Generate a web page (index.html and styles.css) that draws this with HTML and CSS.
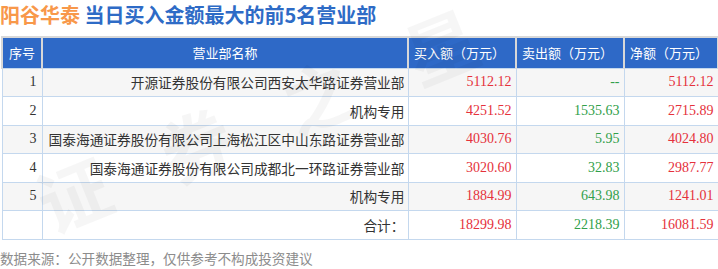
FILE: index.html
```html
<!DOCTYPE html>
<html lang="zh-CN">
<head>
    <meta charset="UTF-8" />
    <title>阳谷华泰 当日买入金额最大的前5名营业部</title>
    <link rel="stylesheet" href="styles.css">
</head>
<body>

<div class="page">
    <h1 class="title"><span class="stock">阳谷华泰</span> <span class="caption">当日买入金额最大的前5名营业部</span></h1>

    <table class="broker-table">
        <thead>
            <tr>
                <th class="col-no">序号</th>
                <th class="col-name">营业部名称</th>
                <th class="col-num">买入额（万元）</th>
                <th class="col-num">卖出额（万元）</th>
                <th class="col-num">净额（万元）</th>
            </tr>
        </thead>
        <tbody>
            <tr class="odd">
                <td class="no">1</td>
                <td class="name">开源证券股份有限公司西安太华路证券营业部</td>
                <td class="num up">5112.12</td>
                <td class="num down">--</td>
                <td class="num up">5112.12</td>
            </tr>
            <tr>
                <td class="no">2</td>
                <td class="name">机构专用</td>
                <td class="num up">4251.52</td>
                <td class="num down">1535.63</td>
                <td class="num up">2715.89</td>
            </tr>
            <tr class="odd">
                <td class="no">3</td>
                <td class="name">国泰海通证券股份有限公司上海松江区中山东路证券营业部</td>
                <td class="num up">4030.76</td>
                <td class="num down">5.95</td>
                <td class="num up">4024.80</td>
            </tr>
            <tr>
                <td class="no">4</td>
                <td class="name">国泰海通证券股份有限公司成都北一环路证券营业部</td>
                <td class="num up">3020.60</td>
                <td class="num down">32.83</td>
                <td class="num up">2987.77</td>
            </tr>
            <tr class="odd">
                <td class="no">5</td>
                <td class="name">机构专用</td>
                <td class="num up">1884.99</td>
                <td class="num down">643.98</td>
                <td class="num up">1241.01</td>
            </tr>
            <tr>
                <td class="no"></td>
                <td class="name">合计：</td>
                <td class="num up">18299.98</td>
                <td class="num down">2218.39</td>
                <td class="num up">16081.59</td>
            </tr>
        </tbody>
    </table>

    <p class="source">数据来源：公开数据整理，仅供参考不构成投资建议</p>

    <!-- watermark -->
    <div class="watermark"><span>证</span><span>券</span><span>之</span><span>星</span></div>
</div>

</body>
</html>
```

FILE: styles.css
```css
body {
    margin: 0;
    background: #fff;
    font-family: "Liberation Serif", "Noto Sans CJK SC", serif;
    color: #333;
}
.page {
    position: relative;
    width: 718px;
    height: 269px;
    overflow: hidden;
}
.title {
    margin: 0;
    height: 36px;
    font-family: "Noto Sans CJK SC", sans-serif;
    font-size: 20px;
    font-weight: bold;
    line-height: 29px;
    white-space: nowrap;
}
.title .stock {
    color: #f8984a;
}
.title .caption {
    color: #2e6bc6;
}
.broker-table {
    margin-left: 1px;
    width: 716px;
    border-collapse: collapse;
    table-layout: fixed;
}
.broker-table th {
    height: 31px;
    padding: 0 5px;
    background: #2e69c7;
    color: #fff;
    font-family: "Noto Sans CJK SC", sans-serif;
    font-size: 13px;
    font-weight: normal;
    text-align: left;
    border: 2px solid #d8d8d8;
    border-bottom: none;
    box-sizing: border-box;
    white-space: nowrap;
}
.broker-table th.col-no {
    width: 40px;
    text-align: center;
    padding: 0;
}
.broker-table th.col-name {
    width: 366px;
    text-align: center;
}
.broker-table th.col-num {
    width: 108px;
}
.broker-table th:last-child {
    width: 94px;
}
.broker-table td {
    height: 28.5px;
    padding: 0 4px;
    font-size: 14px;
    border: 1px solid #c4d8ee;
    box-sizing: border-box;
    white-space: nowrap;
    text-align: right;
}
.broker-table tr.odd td {
    background: #f6f6f6;
}
.broker-table td.name {
    font-family: "Noto Sans CJK SC", sans-serif;
    font-size: 13.7px;
    padding-right: 3px;
}
.broker-table td.no {
    padding-right: 5px;
}
.up {
    color: #e5313b;
}
.down {
    color: #31a04a;
}
.source {
    margin: 8px 0 0;
    font-family: "Noto Sans CJK SC", sans-serif;
    font-size: 13.6px;
    color: #8c8c8c;
}
.watermark {
    position: absolute;
    left: 40px;
    top: 170px;
    display: flex;
    gap: 60px;
    font-family: "Noto Sans CJK SC", sans-serif;
    font-size: 72px;
    line-height: 72px;
    font-weight: bold;
    color: rgba(0, 0, 0, 0.035);
    transform: rotate(-22deg);
    transform-origin: left center;
    white-space: nowrap;
    pointer-events: none;
}
```
